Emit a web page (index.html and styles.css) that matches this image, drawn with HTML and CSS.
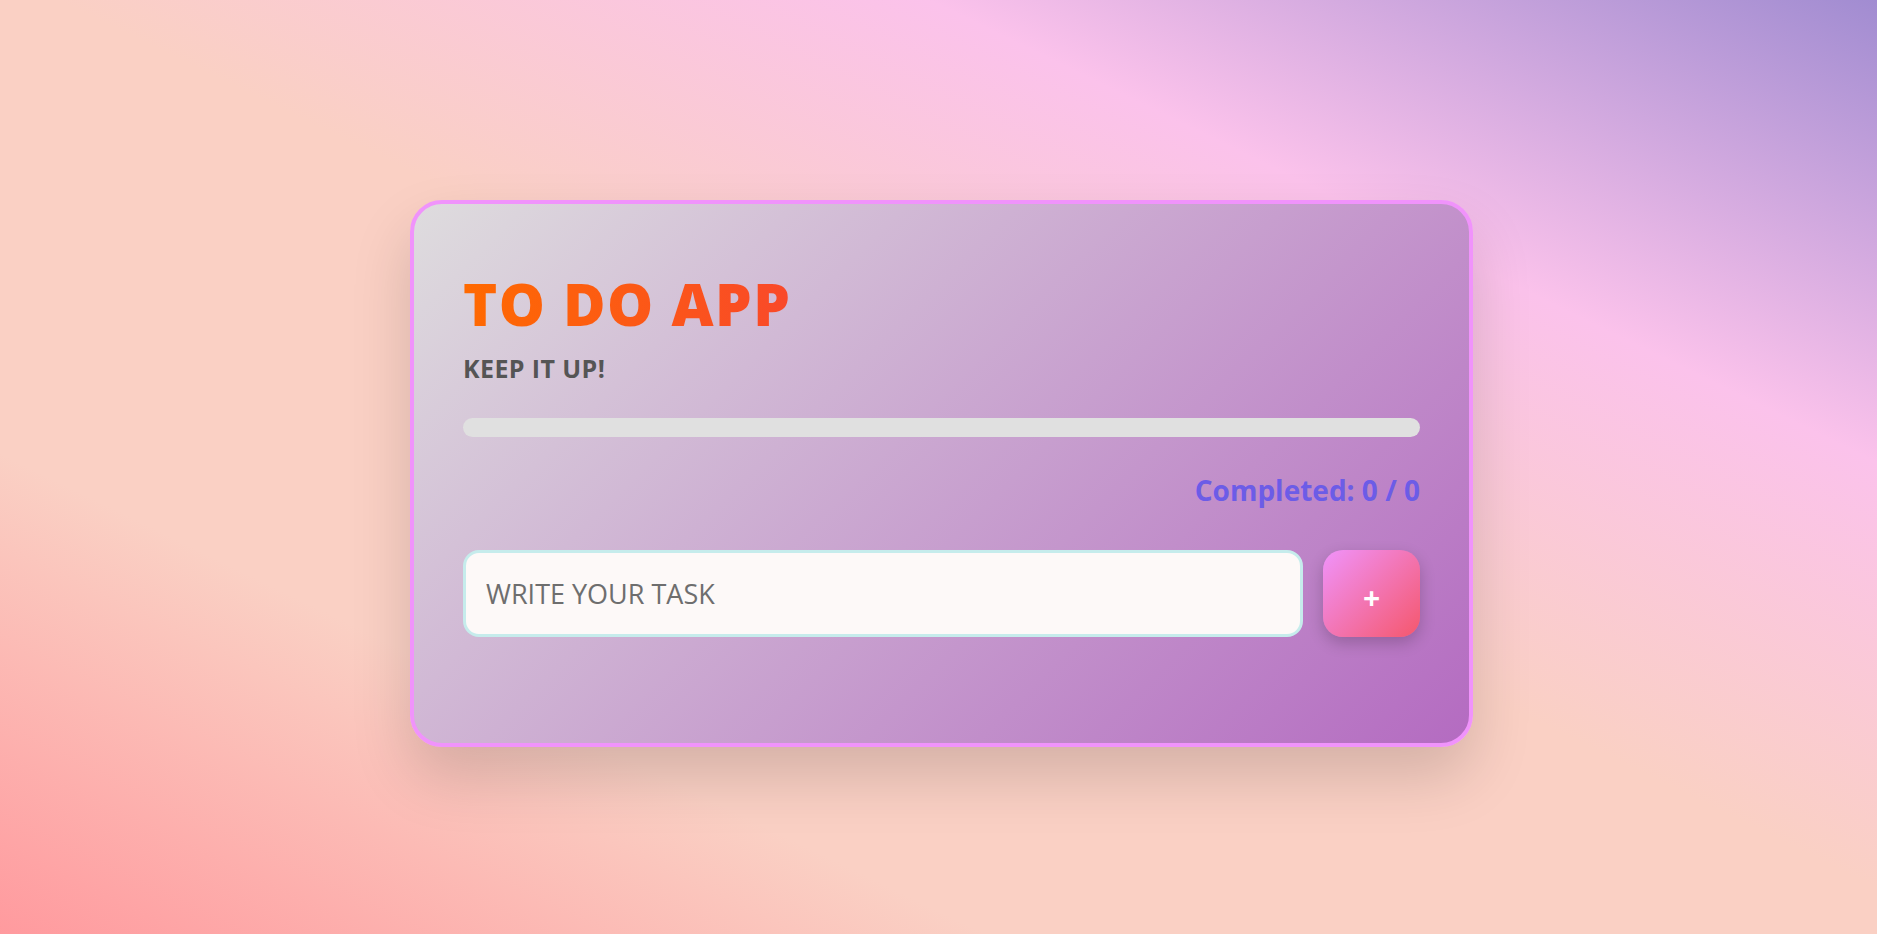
FILE: index.html
```html
<!DOCTYPE html>
<html lang="en">
<head>
<meta charset="utf-8">
<title>To Do App</title>
<link rel="stylesheet" href="styles.css">
</head>
<body>
  <main class="app">
    <h1 class="title">TO DO APP</h1>
    <p class="subtitle">KEEP IT UP!</p>
    <div class="progress"><div class="progress-fill" style="width:0%"></div></div>
    <p class="stats">Completed: 0 / 0</p>
    <form class="add-form" onsubmit="return false">
      <input class="task-input" type="text" placeholder="WRITE YOUR TASK">
      <button class="add-btn" type="submit">+</button>
    </form>
    <ul class="task-list"></ul>
  </main>
</body>
</html>
```

FILE: styles.css
```css
* { box-sizing: border-box; }

html, body { height: 100%; }

body {
  margin: 0;
  min-height: 100vh;
  font-family: "Open Sans", "Liberation Sans", sans-serif;
  background: linear-gradient(26deg, #ff9a9e 0%, #fad0c4 26%, #fad0c4 52%, #fbc2eb 75%, #a18cd1 100%);
  display: flex;
  justify-content: center;
  align-items: flex-start;
  padding: 200px 0 0 6px;
}

.app {
  width: 1063px;
  border: 4px solid #f093fb;
  border-radius: 32px;
  padding: 49px;
  background: linear-gradient(135deg, #dedcde 0%, #b46bc1 100%);
  box-shadow: 0 30px 60px rgba(0, 0, 0, 0.15);
}

.title {
  margin: 22px 0 0;
  font-size: 58px;
  line-height: 1;
  font-weight: 800;
  letter-spacing: 1.5px;
  background: linear-gradient(90deg, #ff6a00, #ee0979);
  -webkit-background-clip: text;
  background-clip: text;
  color: transparent;
}

.subtitle {
  margin: 23px 0 0;
  font-size: 25px;
  line-height: 1;
  font-weight: 700;
  letter-spacing: 0.4px;
  color: #555;
}

.progress {
  margin-top: 37px;
  height: 19px;
  border-radius: 10px;
  background: #e0e0e0;
  overflow: hidden;
}

.progress-fill {
  height: 100%;
  background: linear-gradient(90deg, #f093fb, #f5576c);
}

.stats {
  margin: 39px 0 0;
  text-align: right;
  font-size: 28px;
  line-height: 1;
  font-weight: 700;
  color: #6c5ce7;
}

.add-form {
  margin-top: 46px;
  display: flex;
  gap: 20px;
}

.task-input {
  flex: 1;
  height: 87px;
  border: 3px solid #c6ecec;
  border-radius: 16px;
  background: #fdf9f8;
  padding: 0 20px;
  font-family: "Open Sans", "Liberation Sans", sans-serif;
  font-size: 27px;
  color: #333;
  outline: none;
}

.task-input::placeholder {
  color: #6e6e6e;
}

.add-btn {
  width: 97px;
  height: 87px;
  border: none;
  border-radius: 20px;
  background: linear-gradient(135deg, #f093fb 0%, #f5576c 100%);
  box-shadow: 0 6px 16px rgba(0, 0, 0, 0.2);
  color: #fff;
  font-family: "Open Sans", "Liberation Sans", sans-serif;
  font-size: 30px;
  font-weight: 700;
  line-height: 1;
  padding: 8px 0 0;
  cursor: pointer;
}

.task-list {
  list-style: none;
  margin: 57px 0 0;
  padding: 0;
}
```
